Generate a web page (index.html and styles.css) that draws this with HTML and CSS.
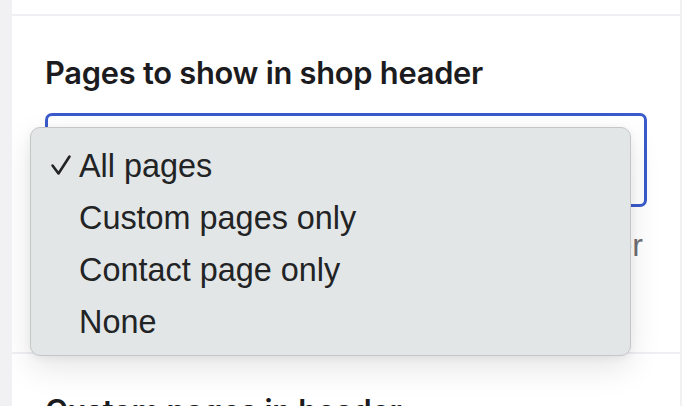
FILE: index.html
```html
<!DOCTYPE html>
<html lang="en">
<head>
<meta charset="utf-8">
<title>Pages to show in shop header</title>
<link rel="stylesheet" href="styles.css">
</head>
<body>
<div class="card">
  <div class="prev"></div>
  <section class="field">
    <h2 class="label">Pages to show in shop header</h2>
    <div class="select"></div>
    <p class="help">Pick the pages for your header</p>
    <ul class="menu">
      <li class="item checked"><span class="check"><svg width="22" height="24" viewBox="0 0 22 24"><path d="M2.5 12.5 L8.5 20.5 L19.5 3.5" fill="none" stroke="#222324" stroke-width="2.6" stroke-linecap="round" stroke-linejoin="round"/></svg></span>All pages</li>
      <li class="item"><span class="check"></span>Custom pages only</li>
      <li class="item"><span class="check"></span>Contact page only</li>
      <li class="item"><span class="check"></span>None</li>
    </ul>
  </section>
  <section class="field next">
    <h2 class="label">Custom pages in header</h2>
  </section>
</div>
</body>
</html>
```

FILE: styles.css
```css
html, body {
  margin: 0;
  padding: 0;
  background: #f1f1f4;
  height: 100%;
  overflow: hidden;
}
.card {
  margin-left: 12px;
  width: 668px;
  background: #ffffff;
  height: 100%;
  overflow: hidden;
}
.prev {
  height: 14px;
  border-bottom: 2px solid #f0f0f4;
}
.field {
  position: relative;
  padding: 41px 33px 0 33px;
  height: 338px;
  box-sizing: border-box;
  border-bottom: 2px solid #f0f0f4;
}
.field.next {
  height: auto;
  border-bottom: 0;
}
.label {
  margin: 0;
  font-family: Inter, "Noto Sans", sans-serif;
  font-weight: 600;
  font-size: 30.8px;
  line-height: 32px;
  color: #1b1b20;
  letter-spacing: -0.25px;
}
.select {
  margin-top: 24px;
  height: 94px;
  width: 602px;
  box-sizing: border-box;
  border: 3px solid #3a5bc9;
  border-radius: 7px;
  background: #fff;
}
.help {
  margin: 18px 0 0 0;
  padding-right: 4px;
  font-family: "Liberation Sans", Arial, sans-serif;
  font-size: 32px;
  line-height: 40px;
  color: #6e6e73;
  text-align: right;
}
.menu {
  position: absolute;
  left: 18px;
  top: 111px;
  width: 601px;
  height: 229px;
  box-sizing: border-box;
  margin: 0;
  padding: 12px 0 0 0;
  list-style: none;
  background: #e3e6e7;
  border: 1px solid #c4c6c8;
  border-radius: 10px;
  box-shadow: 0 12px 32px rgba(0, 0, 0, 0.10), 0 2px 8px rgba(0, 0, 0, 0.06);
}
.item {
  display: flex;
  align-items: baseline;
  height: 52px;
  line-height: 52px;
  font-family: "Liberation Sans", Arial, sans-serif;
  font-size: 32.4px;
  color: #222324;
}
.check {
  width: 48px;
  padding-left: 19px;
  box-sizing: border-box;
  align-self: center;
  display: flex;
  align-items: center;
  height: 52px;
}
.check svg {
  display: block;
  margin-top: -2px;
}
```
